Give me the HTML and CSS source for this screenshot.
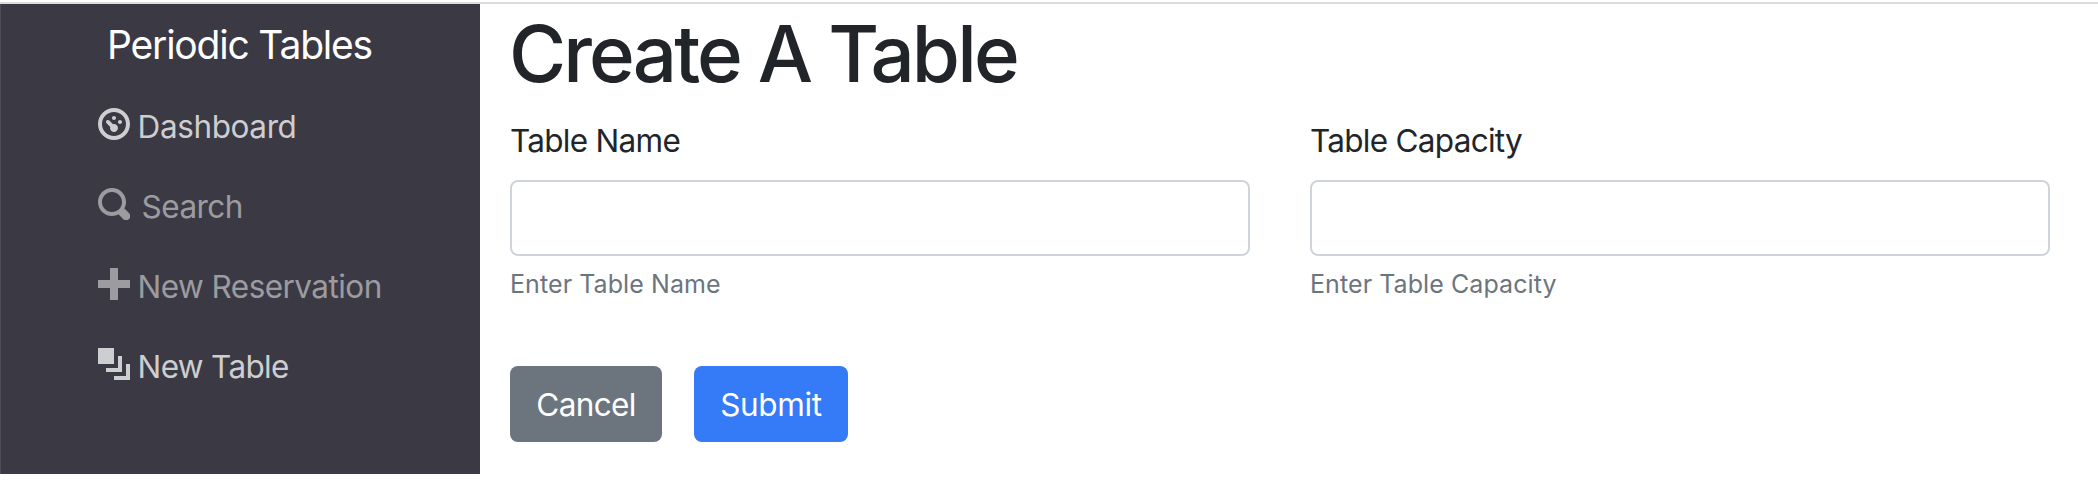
FILE: index.html
```
<!DOCTYPE html>
<html lang="en">
<head>
<meta charset="utf-8">
<title>Periodic Tables</title>
<link rel="stylesheet" href="styles.css">
</head>
<body>
<div class="app">
  <nav class="sidebar">
    <a class="brand"><span>Periodic Tables</span></a>
    <ul class="menu">
      <li class="item"><svg class="icon" viewBox="0 0 8 8"><path d="M4 0c-2.2 0-4 1.8-4 4s1.8 4 4 4 4-1.8 4-4-1.8-4-4-4zm0 1c1.66 0 3 1.34 3 3s-1.34 3-3 3-3-1.34-3-3 1.34-3 3-3zm0 1c-.28 0-.5.22-.5.5s.22.5.5.5.5-.22.5-.5-.22-.5-.5-.5zm-1.66 1a.5.5 0 0 0-.19.84l.91.91c-.02.08-.06.16-.06.25 0 .55.45 1 1 1s1-.45 1-1-.45-1-1-1c-.09 0-.17.04-.25.06l-.91-.91a.5.5 0 0 0-.44-.16.5.5 0 0 0-.06 0zm3.16 0c-.28 0-.5.22-.5.5s.22.5.5.5.5-.22.5-.5-.22-.5-.5-.5z"/></svg><span class="dashboard">Dashboard</span></li>
      <li class="item muted"><svg class="icon" viewBox="0 0 8 8"><path d="M3.5 0c-1.93 0-3.5 1.57-3.5 3.5s1.57 3.5 3.5 3.5c.59 0 1.17-.14 1.66-.41a1 1 0 0 0 .13.13l1 1a1.02 1.02 0 1 0 1.44-1.44l-1-1a1 1 0 0 0-.16-.13c.27-.49.44-1.06.44-1.66 0-1.93-1.55-3.5-3.5-3.5zm0 1c1.39 0 2.5 1.11 2.5 2.5 0 .66-.24 1.27-.66 1.72l-.03.03a1 1 0 0 0-.13.13c-.44.4-1.04.63-1.69.63-1.39 0-2.5-1.11-2.5-2.5s1.11-2.5 2.5-2.5z"/></svg><span class="search">Search</span></li>
      <li class="item muted"><svg class="icon" viewBox="0 0 8 8"><path d="M3 0v3h-3v2h3v3h2v-3h3v-2h-3v-3h-2z"/></svg><span class="reservation">New Reservation</span></li>
      <li class="item"><svg class="icon" viewBox="0 0 8 8"><path d="M0 0v4h4v-4h-4zm5 2v3h-3v1h4v-4h-1zm2 2v3h-3v1h4v-4h-1z"/></svg><span class="new-table">New Table</span></li>
    </ul>
  </nav>
  <main class="content">
    <h1 class="title">Create A Table</h1>
    <form>
      <div class="fields">
        <div class="field">
          <label class="label" for="name">Table Name</label>
          <input class="input" id="name" type="text">
          <small class="help">Enter Table Name</small>
        </div>
        <div class="field">
          <label class="label" for="capacity">Table Capacity</label>
          <input class="input" id="capacity" type="text">
          <small class="help">Enter Table Capacity</small>
        </div>
      </div>
      <div class="actions">
        <button class="btn cancel" type="button">Cancel</button>
        <button class="btn submit" type="button">Submit</button>
      </div>
    </form>
  </main>
</div>
</body>
</html>
```
FILE: styles.css
```
* { box-sizing: border-box; }
body {
  margin: 0;
  padding-top: 2px;
  background: #fff;
  color: #212529;
  font: 430 31.5px/48px Inter, sans-serif;
}
.app {
  display: flex;
  align-items: flex-start;
  border-top: 2px solid #dcdcdc;
}
.sidebar {
  width: 480px;
  height: 470px;
  padding-top: 11px;
  border-left: 1px solid #4e4d57;
  background: #3b3a44;
}
.brand {
  display: block;
  padding-left: 106px;
  color: #fff;
  font-size: 39px;
  line-height: 60px;
  letter-spacing: -1.2px;
  white-space: nowrap;
}
.menu {
  margin: 0;
  padding: 12px 0 0 96.6px;
  list-style: none;
}
.item {
  display: flex;
  align-items: flex-start;
  height: 80px;
  padding-top: 16px;
  color: #cdced0;
  white-space: nowrap;
}
.muted { color: #9c9ca0; }
.icon {
  width: 32px;
  height: 32px;
  margin: 5px 8px 0 0;
  fill: currentColor;
}
.dashboard { letter-spacing: -0.4px; }
.search { margin-left: 4px; letter-spacing: -0.55px; }
.reservation { letter-spacing: -0.55px; }
.new-table { letter-spacing: -0.68px; }
.content {
  flex: 1;
  padding: 0 48px 0 30px;
}
.title {
  margin: 0 0 15px -1px;
  padding-top: 2px;
  font-size: 78px;
  font-weight: 520;
  line-height: 96px;
  letter-spacing: -2.9px;
}
.fields { display: flex; gap: 60px; }
.field { flex: 1; }
.label {
  display: block;
  margin-bottom: 15px;
  letter-spacing: -0.72px;
}
.input {
  display: block;
  width: 100%;
  height: 76px;
  border: 2px solid #ced4da;
  border-radius: 8px;
  background: #fff;
}
.help {
  display: block;
  margin-top: 8px;
  color: #6c757d;
  font-size: 25px;
  line-height: 40px;
  letter-spacing: 0.08px;
}
.actions { display: flex; gap: 32px; margin-top: 62px; }
.btn {
  height: 76px;
  padding: 1px 0 0;
  border: 0;
  border-radius: 8px;
  color: #fff;
  font: inherit;
}
.cancel { width: 152px; background: #6c757d; letter-spacing: -0.65px; }
.submit { width: 154px; background: #357af6; letter-spacing: -0.35px; }
```
